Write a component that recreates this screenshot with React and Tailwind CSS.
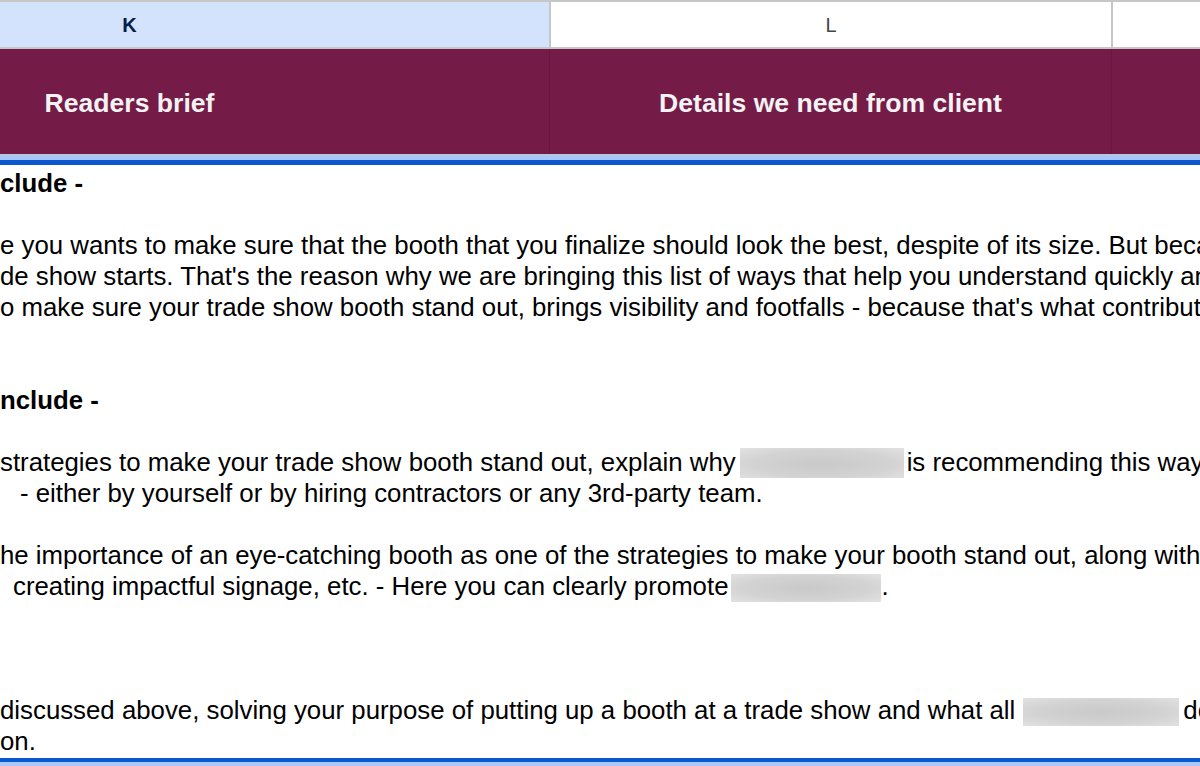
import React from "react";

const Blur = ({ w, h, ml, mr }) => (
  <span
    className={`inline-block align-middle bg-[radial-gradient(ellipse_at_center,#c9c9c9_0%,#d3d3d3_60%,#e2e2e2_100%)] ${w} ${h} ${ml} ${mr}`}
  />
);

const Line = ({ children, bold, className = "" }) => (
  <div className={`h-[31px] leading-[31px] whitespace-nowrap overflow-hidden ${bold ? "font-bold" : ""} ${className}`}>
    {children}
  </div>
);

const App = () => {
  return (
    <div className="w-[1200px] h-[766px] overflow-hidden bg-white font-['Liberation_Sans',Arial,sans-serif]">
      {/* column letters */}
      <div className="flex h-[49px] border-t-2 border-b-2 border-[#c4c7c5]">
        <div className="w-[549px] shrink-0 flex items-center justify-center pr-[290px] bg-[#d3e3fd] text-[#041e49] font-bold text-[20px]">
          K
        </div>
        <div className="w-[2px] shrink-0 bg-[#c4c7c5]" />
        <div className="w-[560px] shrink-0 flex items-center justify-center text-[#444746] text-[20px]">
          L
        </div>
        <div className="w-[2px] shrink-0 bg-[#c4c7c5]" />
        <div className="flex-1" />
      </div>

      {/* header row */}
      <div className="flex h-[106px] bg-[#741b47] border-b border-[#c4c7c5] text-[#f3f3f3] font-bold text-[26.6px]">
        <div className="w-[550px] shrink-0 flex items-center justify-center pt-[4px] pr-[290px] border-r border-[#681840]">
          Readers brief
        </div>
        <div className="w-[562px] shrink-0 flex items-center justify-center pt-[4px] border-r border-[#681840]">
          Details we need from client
        </div>
        <div className="flex-1" />
      </div>

      {/* selection top border */}
      <div className="h-[5px] bg-[#a8c7fa]" />
      <div className="h-[5px] bg-[#0b57d0]" />

      {/* content */}
      <div className="h-[593px] pt-[3px] overflow-hidden text-[25.8px] text-black">
        <Line bold>clude -</Line>
        <Line />
        <Line>e you wants to make sure that the booth that you finalize should look the best, despite of its size. But because</Line>
        <Line>de show starts. That's the reason why we are bringing this list of ways that help you understand quickly and</Line>
        <Line>o make sure your trade show booth stand out, brings visibility and footfalls - because that's what contributes</Line>
        <Line />
        <Line />
        <Line bold>nclude -</Line>
        <Line />
        <Line>
          strategies to make your trade show booth stand out, explain why
          <Blur w="w-[164px]" h="h-[32px]" ml="ml-[4px]" mr="mr-[3px]" />
          is recommending this way
        </Line>
        <Line className="pl-[20px]">- either by yourself or by hiring contractors or any 3rd-party team.</Line>
        <Line />
        <Line>he importance of an eye-catching booth as one of the strategies to make your booth stand out, along with</Line>
        <Line className="pl-[13px]">
          creating impactful signage, etc. - Here you can clearly promote
          <Blur w="w-[150px]" h="h-[28px]" ml="ml-[2px]" mr="mr-[1px]" />
          .
        </Line>
        <Line />
        <Line />
        <Line />
        <Line>
          discussed above, solving your purpose of putting up a booth at a trade show and what all
          <Blur w="w-[156px]" h="h-[28px]" ml="ml-[8px]" mr="mr-[4px]" />
          do
        </Line>
        <Line>on.</Line>
      </div>

      {/* selection bottom border */}
      <div className="h-[4px] bg-[#0b57d0]" />
      <div className="h-[4px] bg-[#a8c7fa]" />
    </div>
  );
};

export default App;
